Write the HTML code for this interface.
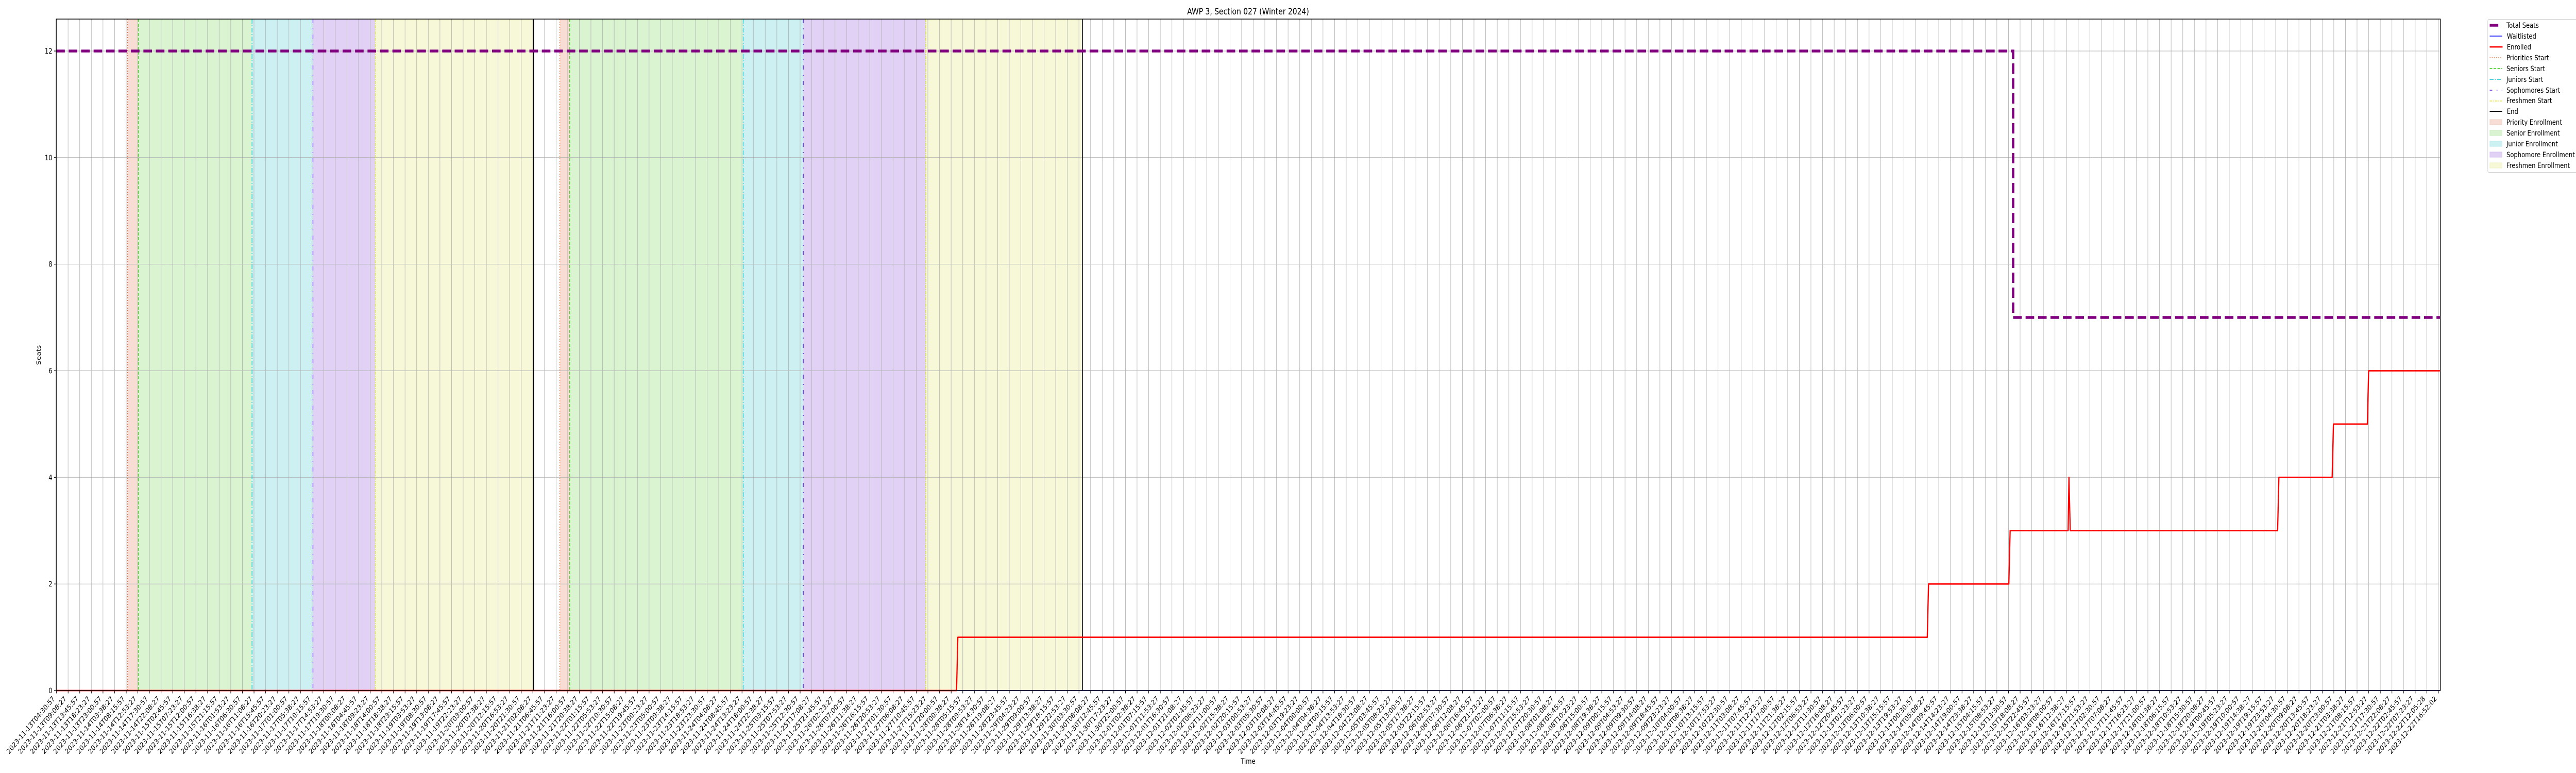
<!DOCTYPE html>
<html><head><meta charset="utf-8"><style>
html,body{margin:0;padding:0;background:#fff;overflow:hidden;}
#wrap{width:6000px;height:1500px;position:absolute;left:0;top:0;overflow:hidden;font-family:"DejaVu Sans","Liberation Sans",sans-serif;transform-origin:0 0;transform:scaleX(0.833333);}
svg{position:absolute;left:0;top:0;}
.xl{position:absolute;left:117.47px;top:1349px;width:5600px;height:10px;}
.xl div{width:27.063px;float:left;position:relative;height:10px;}
.xl span{position:absolute;right:calc(50% + 10px);top:0;white-space:nowrap;font-size:13.9px;line-height:15px;color:#000;transform-origin:100% 0;transform:rotate(-45deg);}
</style></head><body><div id="wrap">
<svg width="6000" height="1500" viewBox="0 0 6000 1500">
<defs>
<pattern id="vg" x="131" y="0" width="27.063" height="1500" patternUnits="userSpaceOnUse"><rect x="0" y="0" width="1" height="1500" fill="#b0b0b0"/></pattern>
<pattern id="vt" x="131" y="0" width="27.063" height="1500" patternUnits="userSpaceOnUse"><rect x="0" y="0" width="1.2" height="1500" fill="#000"/></pattern>
</defs>
<rect x="297" y="37" width="25" height="1303" fill="#f7ddd3"/>
<rect x="322" y="37" width="265" height="1303" fill="#daf4d2"/>
<rect x="587" y="37" width="142" height="1303" fill="#cdf1f3"/>
<rect x="729" y="37" width="145" height="1303" fill="#e0d1f5"/>
<rect x="874" y="37" width="369" height="1303" fill="#f7f8d8"/>
<rect x="1304" y="37" width="23" height="1303" fill="#f7ddd3"/>
<rect x="1327" y="37" width="404" height="1303" fill="#daf4d2"/>
<rect x="1731" y="37" width="140" height="1303" fill="#cdf1f3"/>
<rect x="1871" y="37" width="285" height="1303" fill="#e0d1f5"/>
<rect x="2156" y="37" width="365" height="1303" fill="#f7f8d8"/>
<rect x="131" y="37" width="5553" height="1303" fill="url(#vg)"/>
<g stroke="#b0b0b0" stroke-width="1">
<line x1="131" y1="99" x2="5684" y2="99"/>
<line x1="131" y1="305.8" x2="5684" y2="305.8"/>
<line x1="131" y1="512.6" x2="5684" y2="512.6"/>
<line x1="131" y1="719.5" x2="5684" y2="719.5"/>
<line x1="131" y1="926.3" x2="5684" y2="926.3"/>
<line x1="131" y1="1133.2" x2="5684" y2="1133.2"/>
</g>
<g stroke-width="1.5" fill="none">
<line x1="297" y1="37" x2="297" y2="1340" stroke="#f0703a" stroke-dasharray="2 3"/>
<line x1="1304" y1="37" x2="1304" y2="1340" stroke="#f0703a" stroke-dasharray="2 3"/>
<line x1="322" y1="37" x2="322" y2="1340" stroke="#33cc11" stroke-dasharray="6 3"/>
<line x1="1327" y1="37" x2="1327" y2="1340" stroke="#33cc11" stroke-dasharray="6 3"/>
<line x1="587" y1="37" x2="587" y2="1340" stroke="#10c4d0" stroke-dasharray="9 3 2 3"/>
<line x1="1731" y1="37" x2="1731" y2="1340" stroke="#10c4d0" stroke-dasharray="9 3 2 3"/>
<line x1="729" y1="37" x2="729" y2="1340" stroke="#5a1ed6" stroke-dasharray="8 10 2 10"/>
<line x1="1871" y1="37" x2="1871" y2="1340" stroke="#5a1ed6" stroke-dasharray="8 10 2 10"/>
<line x1="874" y1="37" x2="874" y2="1340" stroke="#e2e23a" stroke-dasharray="6 2 2 2"/>
<line x1="2156" y1="37" x2="2156" y2="1340" stroke="#e2e23a" stroke-dasharray="6 2 2 2"/>
<line x1="1243" y1="37" x2="1243" y2="1340" stroke="#000" stroke-width="2"/>
<line x1="2521" y1="37" x2="2521" y2="1340" stroke="#000" stroke-width="2"/>
</g>
<line x1="131" y1="1340" x2="5684" y2="1340" stroke="#0000ff" stroke-width="1.6"/>
<path d="M131,1340 H2228 L2231,1236.6 H4489 L4492,1133.2 H4679 L4682,1029.7 H4817 L4819,926.3 L4822,1029.7 H5305 L5308,926.3 H5432 L5435,822.9 H5514 L5517,719.5 H5684" fill="none" stroke="#ff0000" stroke-width="2.8" stroke-linejoin="round"/>
<path d="M131,99 H4689 V616 H5684" fill="none" stroke="#800080" stroke-width="5.5" stroke-dasharray="20 9"/>
<rect x="131" y="37" width="5553" height="1303" fill="none" stroke="#000" stroke-width="1.5"/>
<rect x="130" y="1340.5" width="5556" height="5" fill="url(#vt)"/>
<g stroke="#000" stroke-width="1.2">
<line x1="126" y1="99" x2="131" y2="99"/><line x1="126" y1="305.8" x2="131" y2="305.8"/><line x1="126" y1="512.6" x2="131" y2="512.6"/><line x1="126" y1="719.5" x2="131" y2="719.5"/><line x1="126" y1="926.3" x2="131" y2="926.3"/><line x1="126" y1="1133.2" x2="131" y2="1133.2"/><line x1="126" y1="1340" x2="131" y2="1340"/>
</g>
<g font-family="DejaVu Sans, Liberation Sans, sans-serif" font-size="13.9" text-anchor="end" fill="#000">
<text x="122" y="104">12</text><text x="122" y="310.8">10</text><text x="122" y="517.6">8</text><text x="122" y="724.5">6</text><text x="122" y="931.3">4</text><text x="122" y="1138.2">2</text><text x="122" y="1345">0</text>
</g>
<text x="2907" y="28" font-family="DejaVu Sans, Liberation Sans, sans-serif" font-size="16.7" text-anchor="middle">AWP 3, Section 027 (Winter 2024)</text>
<text x="2907" y="1482" font-family="DejaVu Sans, Liberation Sans, sans-serif" font-size="13.9" text-anchor="middle">Time</text>
<text transform="translate(95,689) rotate(-90)" font-family="DejaVu Sans, Liberation Sans, sans-serif" font-size="13.9" text-anchor="middle">Seats</text>
<rect x="5794.5" y="37.5" width="215" height="297" rx="3" fill="#fff" fill-opacity="0.8" stroke="#d0d0d0" stroke-width="1"/>
<g fill="none">
<line x1="5799" y1="49" x2="5819" y2="49" stroke="#800080" stroke-width="5.5"/>
<line x1="5799" y1="70" x2="5828" y2="70" stroke="#0000ff" stroke-width="1.5"/>
<line x1="5799" y1="91" x2="5829" y2="91" stroke="#ff0000" stroke-width="2.8"/>
<line x1="5799" y1="112" x2="5828" y2="112" stroke="#f0703a" stroke-width="1.5" stroke-dasharray="2 3"/>
<line x1="5799" y1="133" x2="5828" y2="133" stroke="#33cc11" stroke-width="1.5" stroke-dasharray="6 3"/>
<line x1="5799" y1="154" x2="5828" y2="154" stroke="#10c4d0" stroke-width="1.5" stroke-dasharray="9 3 2 3"/>
<line x1="5799" y1="175" x2="5828" y2="175" stroke="#5a1ed6" stroke-width="1.5" stroke-dasharray="6 10 2 10"/>
<line x1="5799" y1="196" x2="5828" y2="196" stroke="#e2e23a" stroke-width="1.5" stroke-dasharray="6 2 2 2"/>
<line x1="5799" y1="216" x2="5828" y2="216" stroke="#000" stroke-width="2"/>
</g>
<rect x="5799.5" y="232" width="28" height="10" fill="#f7ddd3" stroke="#f2cfc2"/>
<rect x="5799.5" y="253" width="28" height="10" fill="#daf4d2" stroke="#c8efbe"/>
<rect x="5799.5" y="274" width="28" height="10" fill="#cdf1f3" stroke="#b8eaee"/>
<rect x="5799.5" y="295" width="28" height="10" fill="#e0d1f5" stroke="#d2bdf1"/>
<rect x="5799.5" y="316" width="28" height="10" fill="#f7f8d8" stroke="#eff1c2"/>
<g font-family="DejaVu Sans, Liberation Sans, sans-serif" font-size="13.9" fill="#000">
<text x="5838" y="54">Total Seats</text>
<text x="5839" y="75">Waitlisted</text>
<text x="5839" y="96">Enrolled</text>
<text x="5838" y="117">Priorities Start</text>
<text x="5838" y="138">Seniors Start</text>
<text x="5838" y="159">Juniors Start</text>
<text x="5838" y="180">Sophomores Start</text>
<text x="5838" y="200">Freshmen Start</text>
<text x="5839" y="221">End</text>
<text x="5838" y="242">Priority Enrollment</text>
<text x="5838" y="263">Senior Enrollment</text>
<text x="5838" y="284">Junior Enrollment</text>
<text x="5838" y="305">Sophomore Enrollment</text>
<text x="5838" y="326">Freshmen Enrollment</text>
</g>
</svg>
<div class="xl">
<div><span>2023-11-13T04:30:57</span></div><div><span>2023-11-13T09:08:27</span></div><div><span>2023-11-13T13:45:57</span></div><div><span>2023-11-13T18:23:27</span></div><div><span>2023-11-13T23:00:57</span></div><div><span>2023-11-14T03:38:27</span></div><div><span>2023-11-14T08:15:57</span></div><div><span>2023-11-14T12:53:27</span></div><div><span>2023-11-14T17:30:57</span></div><div><span>2023-11-14T22:08:27</span></div><div><span>2023-11-15T02:45:57</span></div><div><span>2023-11-15T07:23:27</span></div><div><span>2023-11-15T12:00:57</span></div><div><span>2023-11-15T16:38:27</span></div><div><span>2023-11-15T21:15:57</span></div><div><span>2023-11-16T01:53:27</span></div>
<div><span>2023-11-16T06:30:57</span></div><div><span>2023-11-16T11:08:27</span></div><div><span>2023-11-16T15:45:57</span></div><div><span>2023-11-16T20:23:27</span></div><div><span>2023-11-17T01:00:57</span></div><div><span>2023-11-17T05:38:27</span></div><div><span>2023-11-17T10:15:57</span></div><div><span>2023-11-17T14:53:27</span></div><div><span>2023-11-17T19:30:57</span></div><div><span>2023-11-18T00:08:27</span></div><div><span>2023-11-18T04:45:57</span></div><div><span>2023-11-18T09:23:27</span></div><div><span>2023-11-18T14:00:57</span></div><div><span>2023-11-18T18:38:27</span></div><div><span>2023-11-18T23:15:57</span></div><div><span>2023-11-19T03:53:27</span></div>
<div><span>2023-11-19T08:30:57</span></div><div><span>2023-11-19T13:08:27</span></div><div><span>2023-11-19T17:45:57</span></div><div><span>2023-11-19T22:23:27</span></div><div><span>2023-11-20T03:00:57</span></div><div><span>2023-11-20T07:38:27</span></div><div><span>2023-11-20T12:15:57</span></div><div><span>2023-11-20T16:53:27</span></div><div><span>2023-11-20T21:30:57</span></div><div><span>2023-11-21T02:08:27</span></div><div><span>2023-11-21T06:45:57</span></div><div><span>2023-11-21T11:23:27</span></div><div><span>2023-11-21T16:00:57</span></div><div><span>2023-11-21T20:38:27</span></div><div><span>2023-11-22T01:15:57</span></div><div><span>2023-11-22T05:53:27</span></div>
<div><span>2023-11-22T10:30:57</span></div><div><span>2023-11-22T15:08:27</span></div><div><span>2023-11-22T19:45:57</span></div><div><span>2023-11-23T00:23:27</span></div><div><span>2023-11-23T05:00:57</span></div><div><span>2023-11-23T09:38:27</span></div><div><span>2023-11-23T14:15:57</span></div><div><span>2023-11-23T18:53:27</span></div><div><span>2023-11-23T23:30:57</span></div><div><span>2023-11-24T04:08:27</span></div><div><span>2023-11-24T08:45:57</span></div><div><span>2023-11-24T13:23:27</span></div><div><span>2023-11-24T18:00:57</span></div><div><span>2023-11-24T22:38:27</span></div><div><span>2023-11-25T03:15:57</span></div><div><span>2023-11-25T07:53:27</span></div>
<div><span>2023-11-25T12:30:57</span></div><div><span>2023-11-25T17:08:27</span></div><div><span>2023-11-25T21:45:57</span></div><div><span>2023-11-26T02:23:27</span></div><div><span>2023-11-26T07:00:57</span></div><div><span>2023-11-26T11:38:27</span></div><div><span>2023-11-26T16:15:57</span></div><div><span>2023-11-26T20:53:27</span></div><div><span>2023-11-27T01:30:57</span></div><div><span>2023-11-27T06:08:27</span></div><div><span>2023-11-27T10:45:57</span></div><div><span>2023-11-27T15:23:27</span></div><div><span>2023-11-27T20:00:57</span></div><div><span>2023-11-28T00:38:27</span></div><div><span>2023-11-28T05:15:57</span></div><div><span>2023-11-28T09:53:27</span></div>
<div><span>2023-11-28T14:30:57</span></div><div><span>2023-11-28T19:08:27</span></div><div><span>2023-11-28T23:45:57</span></div><div><span>2023-11-29T04:23:27</span></div><div><span>2023-11-29T09:00:57</span></div><div><span>2023-11-29T13:38:27</span></div><div><span>2023-11-29T18:15:57</span></div><div><span>2023-11-29T22:53:27</span></div><div><span>2023-11-30T03:30:57</span></div><div><span>2023-11-30T08:08:27</span></div><div><span>2023-11-30T12:45:57</span></div><div><span>2023-11-30T17:23:27</span></div><div><span>2023-11-30T22:00:57</span></div><div><span>2023-12-01T02:38:27</span></div><div><span>2023-12-01T07:15:57</span></div><div><span>2023-12-01T11:53:27</span></div>
<div><span>2023-12-01T16:30:57</span></div><div><span>2023-12-01T21:08:27</span></div><div><span>2023-12-02T01:45:57</span></div><div><span>2023-12-02T06:23:27</span></div><div><span>2023-12-02T11:00:57</span></div><div><span>2023-12-02T15:38:27</span></div><div><span>2023-12-02T20:15:57</span></div><div><span>2023-12-03T00:53:27</span></div><div><span>2023-12-03T05:30:57</span></div><div><span>2023-12-03T10:08:27</span></div><div><span>2023-12-03T14:45:57</span></div><div><span>2023-12-03T19:23:27</span></div><div><span>2023-12-04T00:00:57</span></div><div><span>2023-12-04T04:38:27</span></div><div><span>2023-12-04T09:15:57</span></div><div><span>2023-12-04T13:53:27</span></div>
<div><span>2023-12-04T18:30:57</span></div><div><span>2023-12-04T23:08:27</span></div><div><span>2023-12-05T03:45:57</span></div><div><span>2023-12-05T08:23:27</span></div><div><span>2023-12-05T13:00:57</span></div><div><span>2023-12-05T17:38:27</span></div><div><span>2023-12-05T22:15:57</span></div><div><span>2023-12-06T02:53:27</span></div><div><span>2023-12-06T07:30:57</span></div><div><span>2023-12-06T12:08:27</span></div><div><span>2023-12-06T16:45:57</span></div><div><span>2023-12-06T21:23:27</span></div><div><span>2023-12-07T02:00:57</span></div><div><span>2023-12-07T06:38:27</span></div><div><span>2023-12-07T11:15:57</span></div><div><span>2023-12-07T15:53:27</span></div>
<div><span>2023-12-07T20:30:57</span></div><div><span>2023-12-08T01:08:27</span></div><div><span>2023-12-08T05:45:57</span></div><div><span>2023-12-08T10:23:27</span></div><div><span>2023-12-08T15:00:57</span></div><div><span>2023-12-08T19:38:27</span></div><div><span>2023-12-09T00:15:57</span></div><div><span>2023-12-09T04:53:27</span></div><div><span>2023-12-09T09:30:57</span></div><div><span>2023-12-09T14:08:27</span></div><div><span>2023-12-09T18:45:57</span></div><div><span>2023-12-09T23:23:27</span></div><div><span>2023-12-10T04:00:57</span></div><div><span>2023-12-10T08:38:27</span></div><div><span>2023-12-10T13:15:57</span></div><div><span>2023-12-10T17:53:27</span></div>
<div><span>2023-12-10T22:30:57</span></div><div><span>2023-12-11T03:08:27</span></div><div><span>2023-12-11T07:45:57</span></div><div><span>2023-12-11T12:23:27</span></div><div><span>2023-12-11T17:00:57</span></div><div><span>2023-12-11T21:38:27</span></div><div><span>2023-12-12T02:15:57</span></div><div><span>2023-12-12T06:53:27</span></div><div><span>2023-12-12T11:30:57</span></div><div><span>2023-12-12T16:08:27</span></div><div><span>2023-12-12T20:45:57</span></div><div><span>2023-12-13T01:23:27</span></div><div><span>2023-12-13T06:00:57</span></div><div><span>2023-12-13T10:38:27</span></div><div><span>2023-12-13T15:15:57</span></div><div><span>2023-12-13T19:53:27</span></div>
<div><span>2023-12-14T00:30:57</span></div><div><span>2023-12-14T05:08:27</span></div><div><span>2023-12-14T09:45:57</span></div><div><span>2023-12-14T14:23:27</span></div><div><span>2023-12-14T19:00:57</span></div><div><span>2023-12-14T23:38:27</span></div><div><span>2023-12-15T04:15:57</span></div><div><span>2023-12-15T08:53:27</span></div><div><span>2023-12-15T13:30:57</span></div><div><span>2023-12-15T18:08:27</span></div><div><span>2023-12-15T22:45:57</span></div><div><span>2023-12-16T03:23:27</span></div><div><span>2023-12-16T08:00:57</span></div><div><span>2023-12-16T12:38:27</span></div><div><span>2023-12-16T17:15:57</span></div><div><span>2023-12-16T21:53:27</span></div>
<div><span>2023-12-17T02:30:57</span></div><div><span>2023-12-17T07:08:27</span></div><div><span>2023-12-17T11:45:57</span></div><div><span>2023-12-17T16:23:27</span></div><div><span>2023-12-17T21:00:57</span></div><div><span>2023-12-18T01:38:27</span></div><div><span>2023-12-18T06:15:57</span></div><div><span>2023-12-18T10:53:27</span></div><div><span>2023-12-18T15:30:57</span></div><div><span>2023-12-18T20:08:27</span></div><div><span>2023-12-19T00:45:57</span></div><div><span>2023-12-19T05:23:27</span></div><div><span>2023-12-19T10:00:57</span></div><div><span>2023-12-19T14:38:27</span></div><div><span>2023-12-19T19:15:57</span></div><div><span>2023-12-19T23:53:27</span></div>
<div><span>2023-12-20T04:30:57</span></div><div><span>2023-12-20T09:08:27</span></div><div><span>2023-12-20T13:45:57</span></div><div><span>2023-12-20T18:23:27</span></div><div><span>2023-12-20T23:00:57</span></div><div><span>2023-12-21T03:38:27</span></div><div><span>2023-12-21T08:15:57</span></div><div><span>2023-12-21T12:53:27</span></div><div><span>2023-12-21T17:30:57</span></div><div><span>2023-12-21T22:08:27</span></div><div><span>2023-12-22T02:45:57</span></div><div><span>2023-12-22T07:23:27</span></div><div><span>2023-12-22T12:05:28</span></div><div><span>2023-12-22T16:52:02</span></div>
</div>
</div></body></html>
